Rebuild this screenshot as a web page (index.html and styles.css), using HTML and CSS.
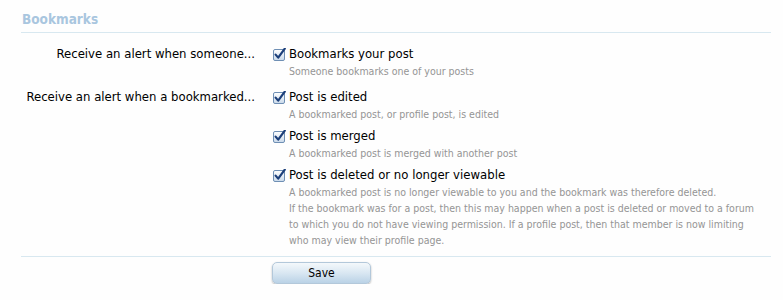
FILE: index.html
```html
<!doctype html>
<html>
    <head>
        <meta charset=utf-8>
        <title>Alert preferences</title>
        <link rel="stylesheet" href="styles.css">
    </head>
    <body>
        <form class="prefs" action="#" method="POST">
            <h3 class="section-title">Bookmarks</h3>

            <dl class="ctrl-row">
                <dt>Receive an alert when someone...</dt>
                <dd>
                    <ul>
                        <li>
                            <label class="opt"><span class="check"></span>Bookmarks your post</label>
                            <p class="explain">Someone bookmarks one of your posts</p>
                        </li>
                    </ul>
                </dd>
            </dl>

            <dl class="ctrl-row">
                <dt>Receive an alert when a bookmarked...</dt>
                <dd>
                    <ul>
                        <li>
                            <label class="opt"><span class="check"></span>Post is edited</label>
                            <p class="explain">A bookmarked post, or profile post, is edited</p>
                        </li>
                        <li>
                            <label class="opt"><span class="check"></span>Post is merged</label>
                            <p class="explain">A bookmarked post is merged with another post</p>
                        </li>
                        <li>
                            <label class="opt"><span class="check"></span>Post is deleted or no longer viewable</label>
                            <p class="explain">A bookmarked post is no longer viewable to you and the bookmark was therefore deleted.<br>
                            If the bookmark was for a post, then this may happen when a post is deleted or moved to a forum to which you do not have viewing permission. If a profile post, then that member is now limiting who may view their profile page.</p>
                        </li>
                    </ul>
                </dd>
            </dl>

            <div class="submit-unit">
                <button type="submit" class="button">Save</button>
            </div>
        </form>

        <svg width="0" height="0" style="position:absolute">
            <defs>
                <linearGradient id="boxfill" x1="0" y1="0" x2="0" y2="1">
                    <stop offset="0" stop-color="#ffffff"/>
                    <stop offset="1" stop-color="#c9d9ea"/>
                </linearGradient>
            </defs>
        </svg>
        <script>
            // same tick mark in every box
            var tick = '<svg width="13" height="13" viewBox="0 0 13 13">' +
                '<rect x="0.5" y="1.5" width="11" height="11" rx="1.5" fill="url(#boxfill)" stroke="#6f8fb4"/>' +
                '<path d="M2.6 6.6 L5.2 9.6 L11.8 0.6" fill="none" stroke="#1c3f7a" stroke-width="2.2" stroke-linecap="round" stroke-linejoin="round"/>' +
                '</svg>';
            document.querySelectorAll('.check').forEach(function (el) {
                el.innerHTML = tick;
            });
        </script>
    </body>
</html>
```

FILE: styles.css
```css
* {
  padding: 0;
  margin: 0;
  box-sizing: border-box;
}

ul {
  list-style: none;
}

body {
  font: 13px/18px "DejaVu Sans Condensed", "DejaVu Sans", sans-serif;
  background: #fefefe;
  color: #000;
}

.prefs {
  padding: 9px 12px 0 21px;
}

.section-title {
  font-size: 13.5px;
  line-height: 20px;
  font-weight: bold;
  color: #a9c6df;
  padding: 0 0 3px 1px;
  border-bottom: 1px solid #d8e8f0;
}

.ctrl-row {
  display: grid;
  grid-template-columns: 234px 1fr;
  column-gap: 18px;
}

.ctrl-row:first-of-type {
  margin-top: 12px;
}

.ctrl-row + .ctrl-row {
  margin-top: 9px;
}

.ctrl-row dt {
  text-align: right;
  white-space: nowrap;
}

.ctrl-row li + li {
  margin-top: 5px;
}

.opt {
  display: flex;
  align-items: center;
  gap: 3px;
  white-space: nowrap;
}

.check {
  display: inline-flex;
  width: 13px;
  height: 13px;
}

.explain {
  max-width: 490px;
  font-size: 10.5px;
  line-height: 16px;
  color: #959595;
  padding-left: 16px;
}

.submit-unit {
  margin-top: 8px;
  border-top: 1px solid #d8e8f0;
  padding: 5px 0 0 251px;
}

.button {
  width: 99px;
  height: 22px;
  font: 12px/20px "DejaVu Sans Condensed", "DejaVu Sans", sans-serif;
  color: #000;
  border: 1px solid #b3c8da;
  border-radius: 5px;
  background: linear-gradient(to bottom, #f4f8fb 0%, #d9e7f2 50%, #bad2e6 100%);
  box-shadow: 0 1px 2px rgba(0, 0, 0, 0.3);
  cursor: pointer;
}
```
